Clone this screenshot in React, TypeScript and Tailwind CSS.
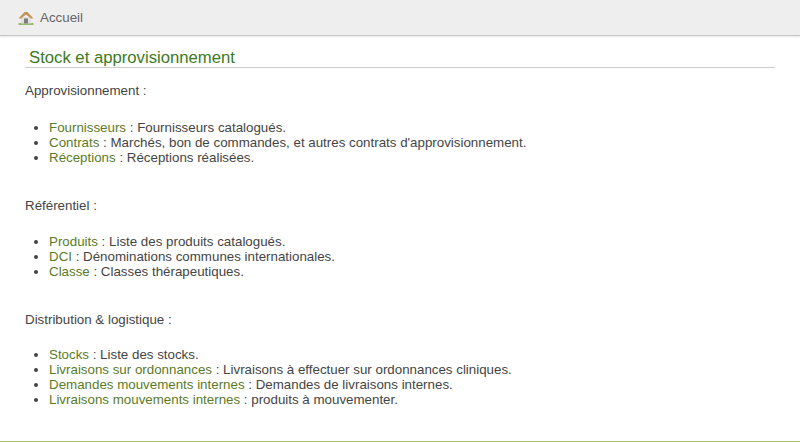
const sections = [
  {
    title: "Approvisionnement :",
    spacing: "mb-[22px]",
    items: [
      ["Fournisseurs", "Fournisseurs catalogués."],
      ["Contrats", "Marchés, bon de commandes, et autres contrats d'approvisionnement."],
      ["Réceptions", "Réceptions réalisées."],
    ],
  },
  {
    title: "Référentiel :",
    spacing: "mb-[21px]",
    items: [
      ["Produits", "Liste des produits catalogués."],
      ["DCI", "Dénominations communes internationales."],
      ["Classe", "Classes thérapeutiques."],
    ],
  },
  {
    title: "Distribution & logistique :",
    spacing: "mb-[20px]",
    items: [
      ["Stocks", "Liste des stocks."],
      ["Livraisons sur ordonnances", "Livraisons à effectuer sur ordonnances cliniques."],
      ["Demandes mouvements internes", "Demandes de livraisons internes."],
      ["Livraisons mouvements internes", "produits à mouvementer."],
    ],
  },
];

const HomeIcon = () => (
  <svg width="16" height="14" viewBox="0 0 16 14" className="shrink-0">
    <rect x="0.5" y="12.2" width="15" height="1.6" fill="#7fb04a" />
    <rect x="3" y="6" width="10" height="6.5" fill="#e4e0d8" />
    <rect x="6" y="7.5" width="4" height="5" fill="#7a7f85" />
    <path d="M0.5 7.5 L6.5 1 L9.5 1 L15.5 7.5 L13 7.5 L8 3.5 L3 7.5 Z" fill="#c4935c" />
  </svg>
);

export default function App() {
  return (
    <div className="h-[442px] w-[800px] overflow-hidden bg-white font-['Liberation_Sans',Arial,sans-serif] text-[13.33px] leading-[15px] text-[#444]">
      <div className="flex h-[36px] items-center gap-[6px] border-b border-[#c8c8c8] bg-[#eeeeee] pl-[18px] shadow-[0_1px_2px_rgba(0,0,0,0.1)]">
        <HomeIcon />
        <span className="text-[#666]">Accueil</span>
      </div>
      <div className="mx-[25px] flex h-[405px] flex-col">
        <h1 className="mt-[13px] h-[19px] border-b border-[#cccccc] pl-[4px] text-[16.7px] leading-[18px] font-normal text-[#3c7a1e]">
          Stock et approvisionnement
        </h1>
        <div className="mt-[15px] flex flex-col gap-[33px]">
          {sections.map((s) => (
            <section key={s.title}>
              <p className={s.spacing}>{s.title}</p>
              <ul className="list-disc pl-[24px]">
                {s.items.map(([name, desc]) => (
                  <li key={name}>
                    <span className="text-[#5b7a2a]">{name}</span> : {desc}
                  </li>
                ))}
              </ul>
            </section>
          ))}
        </div>
      </div>
      <div className="h-px bg-[#a9bb76]" />
    </div>
  );
}
